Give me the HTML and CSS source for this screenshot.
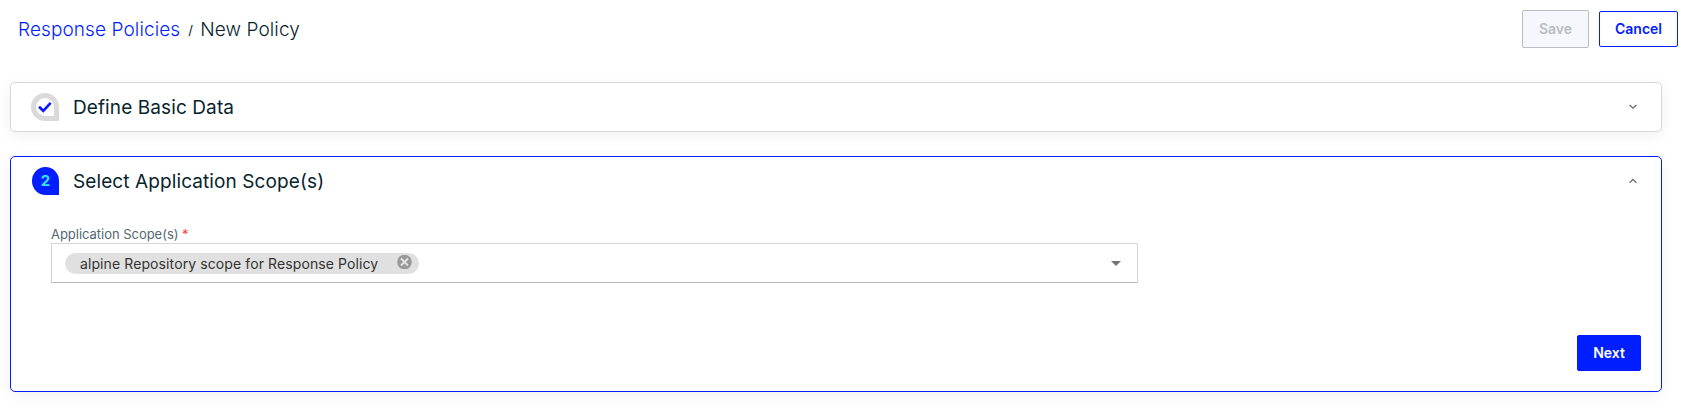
FILE: index.html
```html
<!DOCTYPE html>
<html lang="en">
<head>
<meta charset="utf-8">
<title>New Policy</title>
<link rel="stylesheet" href="styles.css">
</head>
<body>
<header class="topbar">
  <nav class="crumbs"><a class="crumb-link" href="#">Response Policies</a><span class="crumb-sep">/</span><span class="crumb-current">New Policy</span></nav>
  <div class="actions">
    <button class="btn btn-disabled" disabled>Save</button>
    <button class="btn btn-outline">Cancel</button>
  </div>
</header>
<main class="steps">
  <section class="card">
    <div class="card-head">
      <svg class="badge" width="28" height="28" viewBox="0 0 28 28"><path d="M14 2.5A11.5 11.5 0 0 0 14 25.5H25.5V14A11.5 11.5 0 0 0 14 2.5Z" fill="#fff" stroke="#dadada" stroke-width="5"/><path d="M8 13.7l4.3 4.1 7.4-8" fill="none" stroke="#0a1cff" stroke-width="2.6"/></svg>
      <h2 class="card-title">Define Basic Data</h2>
      <svg class="chevron" width="8" height="6" viewBox="0 0 8 6"><path d="M.6 1l3.4 3.2L7.4 1" fill="none" stroke="#666b72" stroke-width="1.3"/></svg>
    </div>
  </section>
  <section class="card card-active">
    <div class="card-head">
      <span class="badge badge-num">2</span>
      <h2 class="card-title">Select Application Scope(s)</h2>
      <svg class="chevron" width="8" height="6" viewBox="0 0 8 6"><path d="M.6 4.8L4 1.4l3.4 3.4" fill="none" stroke="#666b72" stroke-width="1.3"/></svg>
    </div>
    <div class="card-body">
      <label class="label">Application Scope(s) <span class="required">*</span></label>
      <div class="select">
        <span class="chip"><span class="chip-text">alpine Repository scope for Response Policy</span>
          <svg class="chip-remove" width="15" height="14" viewBox="0 0 15 14"><circle cx="7.5" cy="7" r="7.3" fill="#999"/><path d="M4 3.5l7 7M11 3.5l-7 7" stroke="#e4e4e4" stroke-width="1.8"/></svg>
        </span>
        <svg class="caret" width="10" height="5" viewBox="0 0 10 5"><path d="M0 0h10L5 5z" fill="#757575"/></svg>
      </div>
    </div>
    <div class="card-foot"><button class="btn btn-primary">Next</button></div>
  </section>
</main>
</body>
</html>
```
FILE: styles.css
```css
* { box-sizing: border-box; }
body { margin: 0; background: #fff; color: #07242d; font-family: Inter, sans-serif; }
.topbar { display: flex; justify-content: space-between; height: 82px; padding: 10px 7px 0 18px; }
.crumbs { display: flex; align-items: center; height: 39px; font-size: 19px; font-weight: 300; line-height: 24px; letter-spacing: .1px; }
.crumb-link { color: #001eff; text-decoration: none; }
.crumb-sep { width: 20px; padding-left: 8px; font-size: 13px; font-weight: 400; }
.actions { display: flex; align-items: center; gap: 10px; height: 38px; }
.btn { height: 36px; padding: 0; border: 1px solid #001eff; border-radius: 2px; font: 600 14px/20px Inter, sans-serif; }
.btn-disabled { width: 67px; height: 38px; border-color: #b9bdc3; background: #f6f7fc; color: #b9bdc3; }
.btn-outline { width: 79px; background: #fff; color: #001eff; }
.btn-primary { width: 64px; background: #001eff; color: #fff; }
.steps { display: flex; flex-direction: column; gap: 24px; padding: 0 22px 18px 10px; }
.card { width: 1652px; height: 50px; border: 1px solid #d8d8d8; border-radius: 5px; background: #fff; box-shadow: 0 4px 14px rgba(0, 0, 0, .06); }
.card-active { height: 236px; border-color: #001eff; }
.card-head { display: flex; align-items: center; height: 48px; padding: 0 24px 0 20px; }
.badge { flex: none; width: 28px; height: 28px; }
.badge-num { width: 27px; margin-left: 1px; border-radius: 50% 50% 0 50%; background: #001eff; color: #35e5ee; font-size: 15px; font-weight: 700; line-height: 28px; text-align: center; }
.card-title { margin: 2px auto 0 14px; font-size: 19px; font-weight: 400; line-height: 24px; letter-spacing: .1px; }
.card-body { padding: 21px 0 0 40px; }
.label { display: block; height: 17px; font-size: 13px; line-height: 17px; letter-spacing: -.03px; color: #526873; }
.required { color: #ff3b3b; }
.select { display: flex; align-items: center; justify-content: space-between; width: 1087px; height: 40px; padding: 0 16px 0 13px; border: 1px solid #d5d5d5; border-bottom-color: #b8b8b8; }
.chip { display: flex; align-items: center; justify-content: space-between; width: 354px; height: 21px; margin-top: 1px; padding: 0 7px 0 15px; border-radius: 11px; background: #e0e0e0; color: #333; font-size: 14px; line-height: 20px; letter-spacing: .1px; }
.chip-remove { margin-bottom: 3px; }
.caret { margin-top: 1px; }
.card-foot { display: flex; justify-content: flex-end; padding: 52px 20px 0 0; }
```
